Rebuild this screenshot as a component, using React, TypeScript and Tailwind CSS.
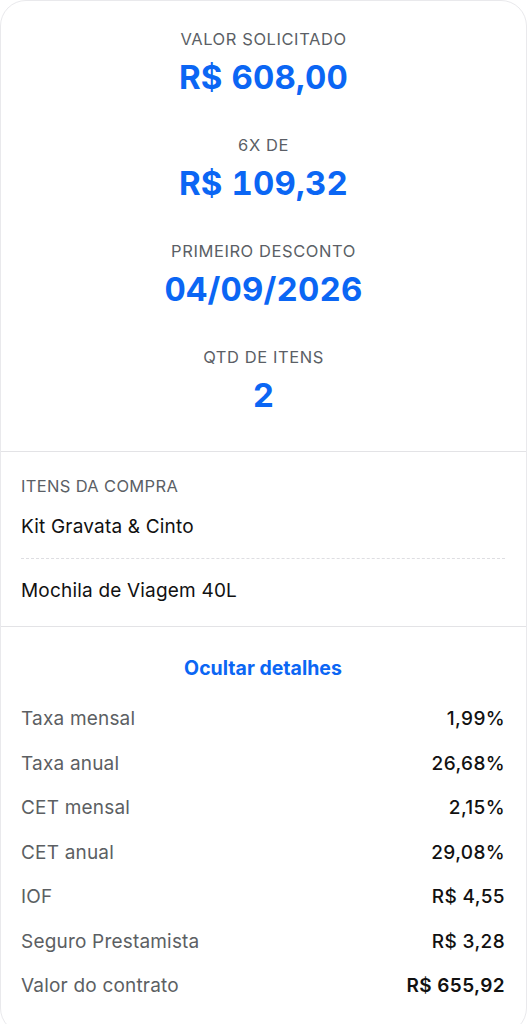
import React from "react";

const blue = "text-[#0b66f4]";

function Stat({ label, value }: { label: string; value: string }) {
  return (
    <div className="flex flex-col items-center">
      <div className="text-[16.5px] leading-[24px] tracking-[0.035em] text-[#5b5f66]">{label}</div>
      <div className={`mt-[6px] text-[33px] leading-[40px] font-bold tabular-nums tracking-[0.005em] ${blue}`}>{value}</div>
    </div>
  );
}

function Row({ label, value, bold }: { label: string; value: string; bold?: boolean }) {
  return (
    <div className="flex h-[44.5px] items-center justify-between">
      <span className="text-[19px] leading-[28px] tracking-[0.01em] text-[#5c5f63]">{label}</span>
      <span className={`text-[19px] leading-[28px] tracking-[0.02em] text-[#111] ${bold ? "font-semibold" : "font-medium"}`}>{value}</span>
    </div>
  );
}

export default function App() {
  return (
    <div className="min-h-[1024px] bg-white overflow-hidden" style={{ fontFamily: "Inter, 'Noto Sans', sans-serif" }}>
      <div className="h-[1034px] rounded-[26px] border border-[#e9e9ec] bg-white">
        <div className="flex flex-col gap-[36px] pt-[26px] pb-[36px]">
          <Stat label="VALOR SOLICITADO" value="R$ 608,00" />
          <Stat label="6X DE" value="R$ 109,32" />
          <Stat label="PRIMEIRO DESCONTO" value="04/09/2026" />
          <Stat label="QTD DE ITENS" value="2" />
        </div>
        <div className="border-t border-[#e3e3e6] pl-[20px] pr-[21px] pt-[22px] pb-[21px]">
          <div className="text-[16.5px] leading-[24px] tracking-[0.02em] text-[#5b5f66]">ITENS DA COMPRA</div>
          <div className="pt-[15px] pb-[17px] border-b border-dashed border-[#dedee2] text-[19px] leading-[28px] tracking-[0.01em] text-[#111]">
            Kit Gravata &amp; Cinto
          </div>
          <div className="pt-[18px] text-[19px] leading-[28px] tracking-[0.01em] text-[#111]">Mochila de Viagem 40L</div>
        </div>
        <div className="border-t border-[#e3e3e6] pl-[20px] pr-[21px] pt-[27px]">
          <div className={`text-center text-[19.5px] leading-[28px] font-bold ${blue}`}>Ocultar detalhes</div>
          <div className="mt-[15px] flex flex-col">
            <Row label="Taxa mensal" value="1,99%" />
            <Row label="Taxa anual" value="26,68%" />
            <Row label="CET mensal" value="2,15%" />
            <Row label="CET anual" value="29,08%" />
            <Row label="IOF" value="R$ 4,55" />
            <Row label="Seguro Prestamista" value="R$ 3,28" />
            <Row label="Valor do contrato" value="R$ 655,92" bold />
          </div>
        </div>
      </div>
    </div>
  );
}
